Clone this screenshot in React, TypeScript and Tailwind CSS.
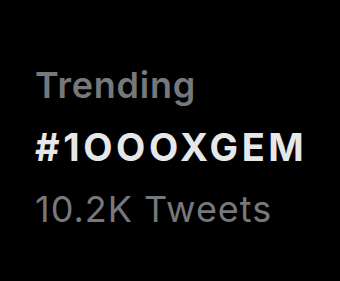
import React from 'react';

const TrendItem = () => {
  return (
    <div className="h-[281px] w-[340px] bg-black pt-[54px] pl-[35px] font-['Inter',sans-serif] text-[36px] leading-[62px]">
      <div className="font-semibold tracking-[0.75px] text-[#77787c]">Trending</div>
      <div className="text-[38px] font-bold tracking-[3.6px] text-[#e6e7e8]">#1OOOXGEM</div>
      <div className="font-normal tracking-[1px] text-[#77787c]">10.2K Tweets</div>
    </div>
  );
};

export default function App() {
  return <TrendItem />;
}
